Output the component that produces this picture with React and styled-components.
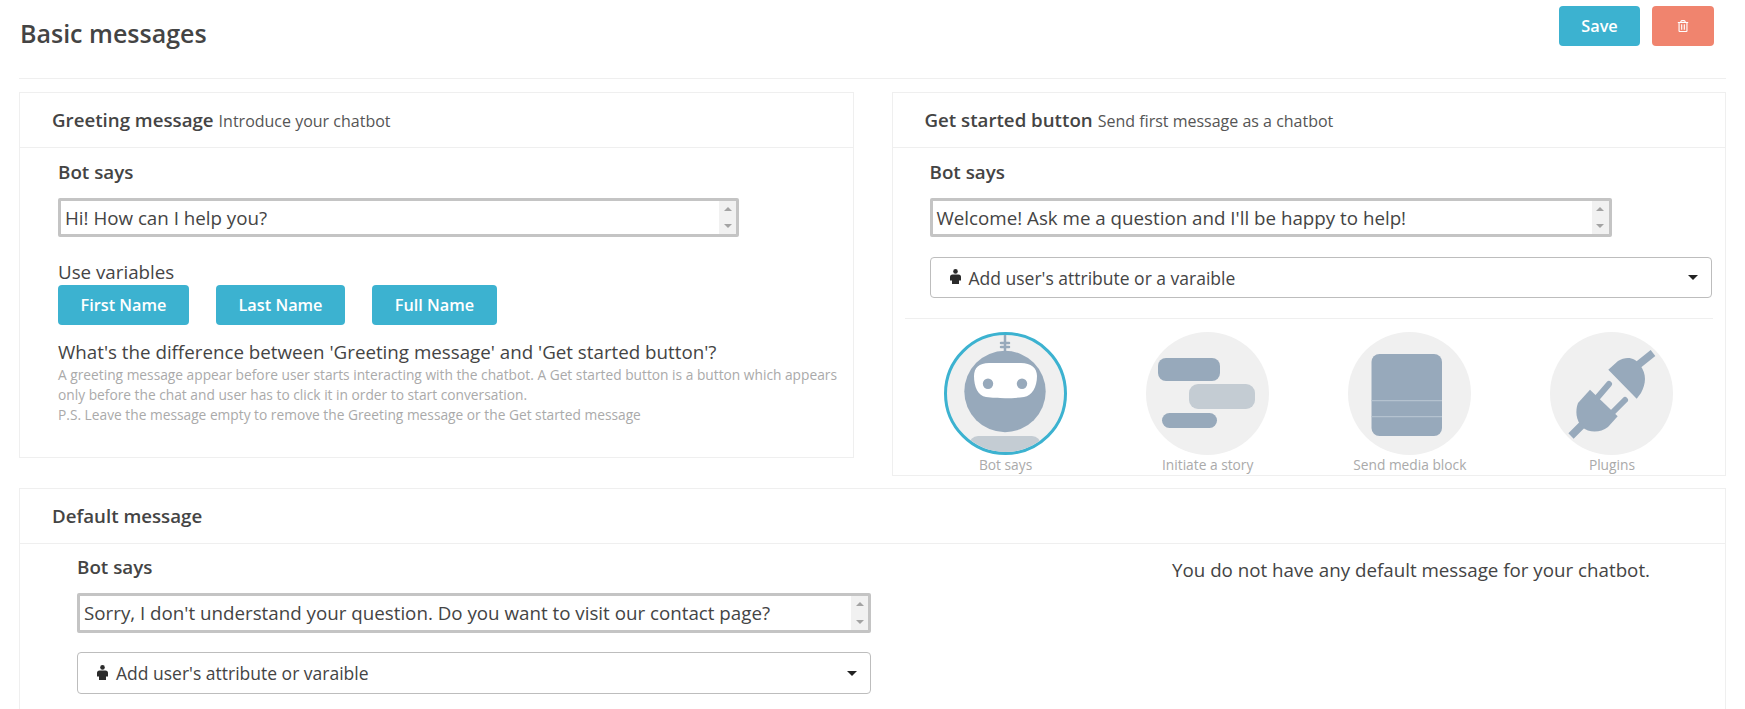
import React from "react";
import styled, { createGlobalStyle } from "styled-components";
import { FaRegTrashAlt } from "react-icons/fa";

const accent = "#3cb2d0";
const line = "#efefef";
const slate = "#97a9bb";
const slateLight = "#c4ccd3";
const discColor = "#f0f0f0";

const GlobalStyle = createGlobalStyle`
  html, body {
    margin: 0;
    height: 709px;
    overflow: hidden;
    background: #fff;
  }
  body {
    font-family: "Open Sans", "Liberation Sans", sans-serif;
    color: #444;
  }
  * {
    box-sizing: border-box;
  }
`;

const Page = styled.div`
  height: 709px;
  overflow: hidden;
  padding: 0 19px;
`;

const Header = styled.header`
  display: flex;
  justify-content: space-between;
  align-items: flex-start;
  height: 79px;
  padding: 6px 12px 0 0;
  border-bottom: 1px solid ${line};
`;

const Title = styled.h1`
  margin: 11px 0 0 1px;
  font-size: 25px;
  line-height: 32px;
  font-weight: 600;
  color: #444;
`;

const Actions = styled.div`
  display: flex;
  gap: 12px;
`;

const Button = styled.button`
  display: flex;
  align-items: center;
  justify-content: center;
  width: ${(p) => p.$width}px;
  height: 40px;
  padding: 0;
  border: 0;
  border-radius: 4px;
  background: ${(p) => p.$bg || accent};
  color: #fff;
  font-family: inherit;
  font-size: 16.3px;
  font-weight: 600;
`;

const TopRow = styled.div`
  display: flex;
  align-items: flex-start;
  gap: 38px;
  margin-top: 13px;
`;

const Card = styled.section`
  flex: 1;
  border: 1px solid ${line};
`;

const WideCard = styled(Card)`
  margin-top: 12px;
  height: 400px;
`;

const CardHead = styled.div`
  display: flex;
  align-items: baseline;
  gap: 5px;
  height: 55px;
  padding: 13px 0 0 32px;
  border-bottom: 1px solid ${line};
`;

const CardTitle = styled.h2`
  margin: 0;
  font-size: 18.7px;
  line-height: 28px;
  font-weight: 600;
  color: #444;
`;

const CardHint = styled.span`
  font-size: 16px;
  color: #555;
`;

const CardBody = styled.div`
  padding: 12px ${(p) => p.$right || 12}px ${(p) => p.$bottom || 0}px ${(p) => p.$left || 38}px;
`;

const FieldLabel = styled.div`
  font-size: 18.8px;
  line-height: 24px;
  font-weight: 600;
  color: #444;
`;

const TextBox = styled.div`
  display: flex;
  width: ${(p) => p.$width}px;
  height: ${(p) => p.$height || 39}px;
  margin-top: 14px;
  border: 3px solid #c4c4c4;
  border-radius: 2px;
  background: #fff;
`;

const TextInput = styled.textarea`
  flex: 1;
  padding: 4px 4px 0;
  border: 0;
  outline: 0;
  resize: none;
  overflow: hidden;
  font-family: inherit;
  font-size: 18.75px;
  line-height: 25px;
  color: #444;
`;

const ScrollTrack = styled.div`
  display: flex;
  flex-direction: column;
  align-items: center;
  justify-content: space-between;
  width: 17px;
  padding: 6px 0;
  background: #f1f1f1;
`;

const ScrollArrow = styled.span`
  width: 0;
  height: 0;
  border-left: 4px solid transparent;
  border-right: 4px solid transparent;
  border-${(p) => (p.$down ? "top" : "bottom")}: 4px solid #a3a3a3;
`;

const Dropdown = styled.div`
  display: flex;
  align-items: center;
  height: ${(p) => p.$height || 41}px;
  margin-top: ${(p) => p.$top || 20}px;
  padding: 0 13px 0 18px;
  border: 1px solid #bdbdbd;
  border-radius: 4px;
  font-size: 17.5px;
  color: #444;
`;

const DropdownText = styled.span`
  flex: 1;
  margin-left: 7px;
`;

const PersonSvg = styled.svg`
  flex: none;
  width: 13px;
  height: 15px;
  margin-top: -2px;
  fill: #2b2b2b;
`;

const Caret = styled.span`
  width: 0;
  height: 0;
  border-left: 5px solid transparent;
  border-right: 5px solid transparent;
  border-top: 5px solid #222;
`;

const PlainLabel = styled.div`
  margin-top: ${(p) => p.$top}px;
  font-size: 18.75px;
  line-height: 24px;
  color: #444;
`;

const VarRow = styled.div`
  display: flex;
  gap: 27px;
  margin-top: 1px;
`;

const HelpText = styled.p`
  margin: 1px 0 0;
  font-size: 13.75px;
  line-height: 20px;
  color: #aaa;
`;

const Rule = styled.div`
  margin: 20px 12px 0;
  border-top: 1px solid ${line};
`;

const Options = styled.div`
  display: grid;
  grid-template-columns: repeat(4, 1fr);
  margin: 13px 12px 0;
`;

const Option = styled.div`
  display: flex;
  flex-direction: column;
  align-items: center;
`;

const Disc = styled.div`
  width: 123px;
  height: 123px;
  border-radius: 50%;
  overflow: hidden;
  background: ${discColor};
  border: ${(p) => (p.$active ? `3px solid ${accent}` : "0")};
`;

const OptionLabel = styled.div`
  font-size: 13.75px;
  line-height: 20px;
  color: #aaa;
`;

const DefaultLayout = styled.div`
  display: flex;
`;

const DefaultForm = styled.div`
  width: 794px;
  margin-left: 57px;
  padding-top: 11px;
`;

const DefaultNote = styled.p`
  margin: 12px 0 0 301px;
  font-size: 18.75px;
  line-height: 28px;
  color: #444;
`;

const Drawing = styled.svg`
  display: block;
  width: 100%;
  height: 100%;
`;

const PersonIcon = () => (
  <PersonSvg viewBox="0 0 13 15">
    <circle cx="6.5" cy="2.4" r="2.3" />
    <path d="M3.5 5.400h6a2.500 2.500 0 0 1 2.500 2.500v3.600h-2V15h-7v-3.500H1V7.900a2.500 2.500 0 0 1 2.500-2.500z" />
  </PersonSvg>
);

const BotIcon = () => (
  <Drawing viewBox="3 3 117 117">
    <path d="M61 0v19" stroke={slate} strokeWidth="2.5" />
    <path d="M57 11h8M57 15h8" stroke={slate} strokeWidth="2.5" strokeLinecap="round" />
    <circle cx="61" cy="59.5" r="40.7" fill={slate} />
    <path
      d="M45 31h32c10 0 16 5 16 13 0 11-5 20-13 21-12 1.600-26 1.600-38 0-8-1-12-10-12-21 0-8 5-13 15-13z"
      fill="#fff"
    />
    <circle cx="44" cy="51.700" r="5.200" fill={slate} />
    <circle cx="78" cy="51.700" r="5.200" fill={slate} />
    <rect x="25" y="104" width="72" height="30" rx="9" fill={slateLight} />
  </Drawing>
);

const StoryIcon = () => (
  <Drawing viewBox="0 0 123 123">
    <rect x="12" y="26" width="62" height="23" rx="8" fill={slate} />
    <rect x="43" y="52" width="66" height="25" rx="9" fill={slateLight} />
    <rect x="16" y="81" width="55" height="15" rx="7.500" fill={slate} />
  </Drawing>
);

const MediaIcon = () => (
  <Drawing viewBox="0 0 123 123">
    <rect x="23.500" y="22" width="70.500" height="82" rx="8" fill={slate} />
    <path d="M23.500 68.700h70.500M23.500 84.700h70.500" stroke="#b4c2cf" strokeWidth="1.300" />
  </Drawing>
);

const PlugIcon = () => (
  <Drawing viewBox="0 0 123 123">
    <path d="M58.300 37.700L68 29c8-5 17-4 22 4 7 9 6 19 1 28l-4.300 5.700z" fill={slate} />
    <path d="M88 33l15-12" stroke={slate} strokeWidth="7.500" />
    <path d="M40 57.700L67.700 84.300 58 95c-8 6-19 6-26 0-6-7-7-16-4-24z" fill={slate} />
    <path d="M47 66l12-14M62 81l13-13" stroke={slate} strokeWidth="6" strokeLinecap="round" />
    <path d="M33 92L21 104" stroke={slate} strokeWidth="7.500" />
  </Drawing>
);

const ScrollableText = ({ value, width, height }) => (
  <TextBox $width={width} $height={height}>
    <TextInput readOnly rows={1} defaultValue={value} />
    <ScrollTrack>
      <ScrollArrow />
      <ScrollArrow $down />
    </ScrollTrack>
  </TextBox>
);

const AttributeSelect = ({ text, height, top }) => (
  <Dropdown $height={height} $top={top}>
    <PersonIcon />
    <DropdownText>{text}</DropdownText>
    <Caret />
  </Dropdown>
);

const options = [
  { id: "bot", label: "Bot says", Icon: BotIcon, active: true },
  { id: "story", label: "Initiate a story", Icon: StoryIcon },
  { id: "media", label: "Send media block", Icon: MediaIcon },
  { id: "plugins", label: "Plugins", Icon: PlugIcon },
];

const App = () => {
  return (
    <Page>
      <GlobalStyle />
      <Header>
        <Title>Basic messages</Title>
        <Actions>
          <Button $width={81}>Save</Button>
          <Button $width={62} $bg="#f0846e" aria-label="Delete">
            <FaRegTrashAlt size={12} />
          </Button>
        </Actions>
      </Header>

      <TopRow>
        <Card>
          <CardHead>
            <CardTitle>Greeting message</CardTitle>
            <CardHint>Introduce your chatbot</CardHint>
          </CardHead>
          <CardBody $bottom={32}>
            <FieldLabel>Bot says</FieldLabel>
            <ScrollableText value="Hi! How can I help you?" width={681} />
            <PlainLabel $top={23}>Use variables</PlainLabel>
            <VarRow>
              <Button $width={131}>First Name</Button>
              <Button $width={129}>Last Name</Button>
              <Button $width={125}>Full Name</Button>
            </VarRow>
            <PlainLabel $top={15}>
              What's the difference between 'Greeting message' and 'Get started button'?
            </PlainLabel>
            <HelpText>
              A greeting message appear before user starts interacting with the chatbot. A Get
              started button is a button which appears only before the chat and user has to click it
              in order to start conversation.
              <br />
              P.S. Leave the message empty to remove the Greeting message or the Get started message
            </HelpText>
          </CardBody>
        </Card>

        <Card>
          <CardHead>
            <CardTitle>Get started button</CardTitle>
            <CardHint>Send first message as a chatbot</CardHint>
          </CardHead>
          <CardBody $left={37} $right={13}>
            <FieldLabel>Bot says</FieldLabel>
            <ScrollableText value="Welcome! Ask me a question and I'll be happy to help!" width={682} />
            <AttributeSelect text="Add user's attribute or a varaible" />
          </CardBody>
          <Rule />
          <Options>
            {options.map(({ id, label, Icon, active }) => (
              <Option key={id}>
                <Disc $active={active}>
                  <Icon />
                </Disc>
                <OptionLabel>{label}</OptionLabel>
              </Option>
            ))}
          </Options>
        </Card>
      </TopRow>

      <WideCard>
        <CardHead>
          <CardTitle>Default message</CardTitle>
        </CardHead>
        <DefaultLayout>
          <DefaultForm>
            <FieldLabel>Bot says</FieldLabel>
            <ScrollableText
              value="Sorry, I don't understand your question. Do you want to visit our contact page?"
              width={794}
              height={40}
            />
            <AttributeSelect text="Add user's attribute or varaible" height={42} top={19} />
          </DefaultForm>
          <DefaultNote>You do not have any default message for your chatbot.</DefaultNote>
        </DefaultLayout>
      </WideCard>
    </Page>
  );
};

export default App;
